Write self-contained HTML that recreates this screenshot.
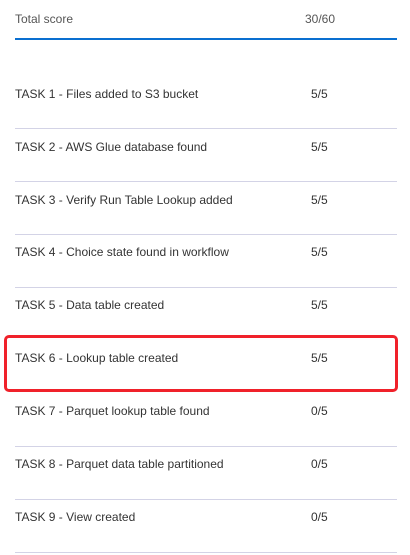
<!DOCTYPE html>
<html><head><style>
body{margin:0;width:410px;height:555px;background:#fff;font-family:"Liberation Sans",sans-serif;font-size:12px;color:#333;position:relative;overflow:hidden}
.t{position:absolute;left:15px;line-height:14px;white-space:nowrap}
.s{position:absolute;left:311px;line-height:14px}
.l{position:absolute;left:15px;width:382px;height:1px;background:#d3d3e6}
</style></head><body>
<div class="t" style="top:12px;color:#555">Total score</div>
<div class="s" style="top:12px;left:305px;color:#555">30/60</div>
<div style="position:absolute;left:15px;top:38px;width:382px;height:2px;background:#0a6fd0"></div>

<div class="t" style="top:87px">TASK 1 - Files added to S3 bucket</div><div class="s" style="top:87px">5/5</div>
<div class="l" style="top:128px"></div>
<div class="t" style="top:140px">TASK 2 - AWS Glue database found</div><div class="s" style="top:140px">5/5</div>
<div class="l" style="top:181px"></div>
<div class="t" style="top:193px">TASK 3 - Verify Run Table Lookup added</div><div class="s" style="top:193px">5/5</div>
<div class="l" style="top:234px"></div>
<div class="t" style="top:245px">TASK 4 - Choice state found in workflow</div><div class="s" style="top:245px">5/5</div>
<div class="l" style="top:287px"></div>
<div class="t" style="top:298px">TASK 5 - Data table created</div><div class="s" style="top:298px">5/5</div>
<div class="t" style="top:351px">TASK 6 - Lookup table created</div><div class="s" style="top:351px">5/5</div>
<div class="t" style="top:404px">TASK 7 - Parquet lookup table found</div><div class="s" style="top:404px">0/5</div>
<div class="l" style="top:446px"></div>
<div class="t" style="top:457px">TASK 8 - Parquet data table partitioned</div><div class="s" style="top:457px">0/5</div>
<div class="l" style="top:499px"></div>
<div class="t" style="top:510px">TASK 9 - View created</div><div class="s" style="top:510px">0/5</div>
<div class="l" style="top:552px"></div>

<div style="position:absolute;left:4px;top:335px;width:388px;height:51px;border:3px solid #f0212a;border-radius:5px"></div>
</body></html>
